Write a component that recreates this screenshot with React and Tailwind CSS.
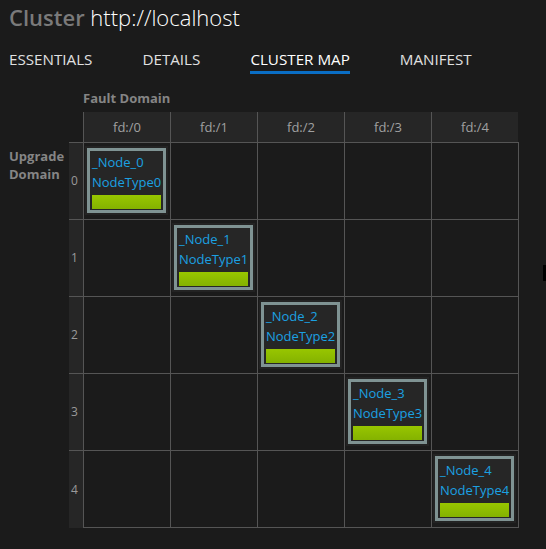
import React from "react";

const cols = [0, 1, 2, 3, 4];

function NodeCard({ i }) {
  return (
    <div className="ml-[1px] mt-[3px] w-[83px] border-2 border-[#232323]">
      <div className="border-[3px] border-[#7f9393] bg-[#262626] px-[2px] pt-[1px] pb-[1px]">
        <div className="text-[13px] leading-[20px] text-[#1ba1e2] whitespace-nowrap">_Node_{i}</div>
        <div className="text-[13px] leading-[20px] text-[#1ba1e2] whitespace-nowrap">NodeType{i}</div>
        <div className="mt-[3px] h-[14px] bg-gradient-to-b from-[#98c600] to-[#84b200]" />
      </div>
    </div>
  );
}

export default function App() {
  return (
    <div className="relative min-h-[549px] w-[546px] overflow-hidden bg-[#1b1b1b] font-['Open_Sans',sans-serif]">
      <div className="pl-[9px] pt-[2px] text-[22px] leading-[30px] whitespace-nowrap">
        <span className="font-semibold text-[#7a7a7a]">Cluster</span>{" "}
        <span className="font-light text-white">http://localhost</span>
      </div>

      <div className="flex gap-[50px] pl-[9px] pt-[17px]">
        {["ESSENTIALS", "DETAILS", "CLUSTER MAP", "MANIFEST"].map((t) => {
          const active = t === "CLUSTER MAP";
          return (
            <div key={t} className="flex flex-col">
              <div className={`text-[15.2px] leading-[20px] whitespace-nowrap ${active ? "text-white" : "text-[#e0e0e0]"}`}>{t}</div>
              <div className={`mt-[2px] h-[3px] ${active ? "bg-[#0a6ec5]" : "bg-transparent"}`} />
            </div>
          );
        })}
      </div>

      <div className="mt-[16px] flex">
        <div className="w-[69px] pl-[9px] pt-[57px] text-[13px] font-bold leading-[18px] text-[#858585]">
          <div>Upgrade</div>
          <div>Domain</div>
        </div>
        <div className="flex flex-col">
          <div className="pl-[14px] text-[13px] font-bold leading-[16px] text-[#858585]">Fault Domain</div>
          <div className="mt-[6px] flex">
            <div className="w-[14px]" />
            {cols.map((c) => (
              <div key={c} className="flex h-[30px] w-[87px] items-center justify-center border-l border-[#555] bg-[#262626] text-[13px] leading-[18px] text-[#a0a0a0]">
                fd:/{c}
              </div>
            ))}
          </div>
          {cols.map((r) => (
            <div key={r} className="flex">
              <div className={`flex w-[14px] items-center border-t border-[#555] bg-[#262626] pl-[2px] text-[12px] text-[#9a9a9a] ${r === 4 ? "h-[78px]" : "h-[77px]"}`}>
                {r}
              </div>
              {cols.map((c) => (
                <div
                  key={c}
                  className={`border-l border-t border-[#555] ${c === 4 ? "w-[88px] border-r" : "w-[87px]"} ${r === 4 ? "h-[78px] border-b" : "h-[77px]"}`}
                >
                  {r === c && <NodeCard i={r} />}
                </div>
              ))}
            </div>
          ))}
        </div>
      </div>

      <div className="absolute right-0 top-[265px] h-[16px] w-[3px] bg-black" />
    </div>
  );
}
